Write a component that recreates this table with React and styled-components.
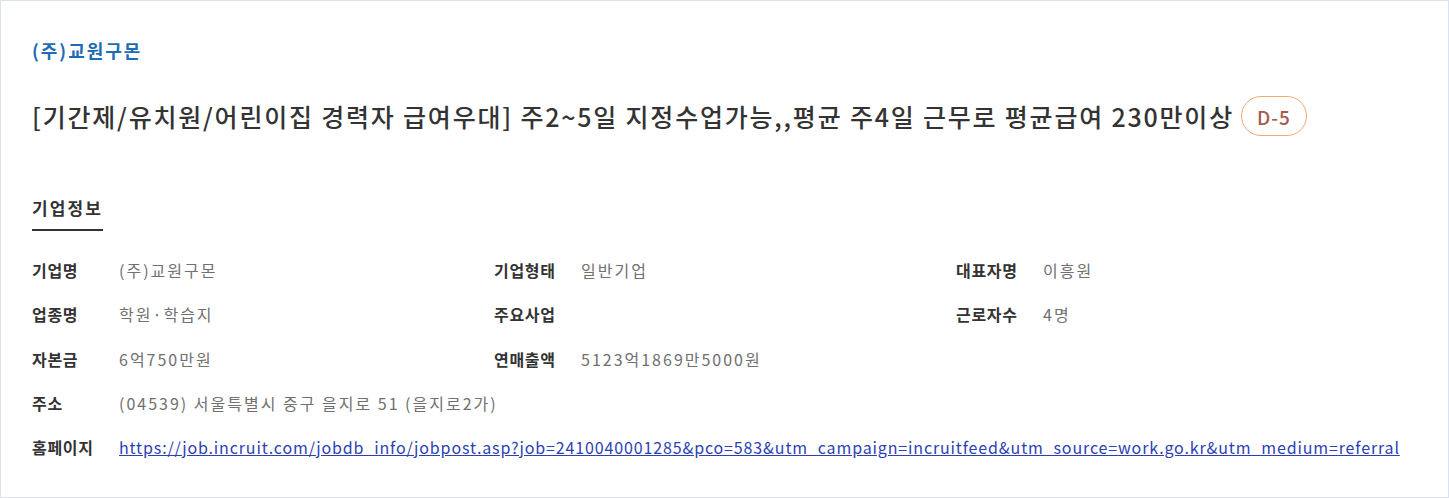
import styled, { createGlobalStyle } from "styled-components";

const GlobalStyle = createGlobalStyle`
  html, body {
    margin: 0;
    padding: 0;
    background: #ffffff;
  }
  body {
    font-family: "Noto Sans CJK KR", "Noto Sans", sans-serif;
    color: #333333;
  }
`;

const Card = styled.div`
  box-sizing: border-box;
  width: 1449px;
  height: 498px;
  border: 1px solid #d9e2ee;
  padding: 36px 31px 0;
`;

const CompanyName = styled.div`
  font-size: 18px;
  font-weight: 700;
  color: #1f6cb3;
  line-height: 26px;
  letter-spacing: 2px;
`;

const TitleRow = styled.div`
  display: flex;
  align-items: center;
  margin-top: 32px;
  height: 42px;
`;

const Title = styled.h1`
  margin: 0;
  font-size: 25px;
  font-weight: 500;
  color: #333333;
  letter-spacing: 1.8px;
  line-height: 34px;
  white-space: nowrap;
`;

const Badge = styled.span`
  display: inline-flex;
  align-items: center;
  justify-content: center;
  box-sizing: border-box;
  flex: 0 0 66px;
  height: 40px;
  margin-left: 7px;
  border: 1px solid #f7aa70;
  border-radius: 20px;
  font-size: 19px;
  font-weight: 500;
  letter-spacing: 1px;
  color: #a65a4f;
`;

const Tab = styled.div`
  display: inline-block;
  margin-top: 58px;
  padding-bottom: 8px;
  border-bottom: 2px solid #333333;
  font-size: 17px;
  font-weight: 700;
  letter-spacing: 2.1px;
  line-height: 26px;
  color: #333333;
`;

const InfoGrid = styled.div`
  display: grid;
  grid-template-columns: repeat(3, 462px);
  grid-auto-rows: 44.25px;
  margin-top: 17px;
`;

const Field = styled.div`
  display: flex;
  align-items: center;
  grid-column: ${(p) => (p.$wide ? "1 / -1" : "auto")};
  font-size: 16px;
`;

const Label = styled.span`
  flex: 0 0 87px;
  font-weight: 700;
  letter-spacing: 0.7px;
  color: #333333;
`;

const Value = styled.span`
  color: #707070;
  letter-spacing: 2px;
  white-space: nowrap;
`;

const Link = styled.a`
  color: #2c3fb4;
  text-decoration: underline;
  white-space: nowrap;
  letter-spacing: 0.86px;
`;

const fields = [
  { label: "기업명", value: "(주)교원구몬" },
  { label: "기업형태", value: "일반기업" },
  { label: "대표자명", value: "이흥원" },
  { label: "업종명", value: "학원·학습지" },
  { label: "주요사업", value: "" },
  { label: "근로자수", value: "4명" },
  { label: "자본금", value: "6억750만원" },
  { label: "연매출액", value: "5123억1869만5000원" },
  { label: "", value: "", empty: true },
  { label: "주소", value: "(04539) 서울특별시 중구 을지로 51 (을지로2가)", wide: true },
];

const url =
  "https://job.incruit.com/jobdb_info/jobpost.asp?job=2410040001285&pco=583&utm_campaign=incruitfeed&utm_source=work.go.kr&utm_medium=referral";

export default function App() {
  return (
    <>
      <GlobalStyle />
      <Card>
        <CompanyName>(주)교원구몬</CompanyName>
        <TitleRow>
          <Title>
            [기간제/유치원/어린이집 경력자 급여우대] 주2~5일 지정수업가능,,평균 주4일 근무로 평균급여 230만이상
          </Title>
          <Badge>D-5</Badge>
        </TitleRow>
        <Tab>기업정보</Tab>
        <InfoGrid>
          {fields.map((f, i) =>
            f.empty ? (
              <Field key={i} />
            ) : (
              <Field key={i} $wide={f.wide}>
                <Label>{f.label}</Label>
                <Value>{f.value}</Value>
              </Field>
            )
          )}
          <Field $wide>
            <Label>홈페이지</Label>
            <Link href={url}>{url}</Link>
          </Field>
        </InfoGrid>
      </Card>
    </>
  );
}
